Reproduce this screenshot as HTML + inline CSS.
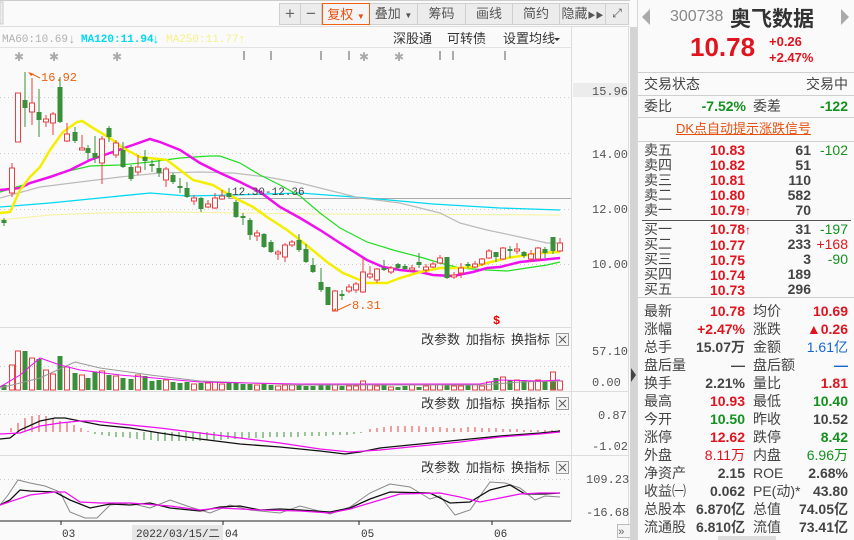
<!DOCTYPE html>
<html><head><meta charset="utf-8">
<style>
*{margin:0;padding:0;box-sizing:border-box}
body{width:854px;height:540px;overflow:hidden;background:#fafafa;font-family:"Liberation Sans","Noto Sans CJK SC",sans-serif;position:relative}
.a{position:absolute;white-space:nowrap}
.cn{font-family:"Liberation Sans","Noto Sans CJK SC",sans-serif}
.btn{position:absolute;top:3px;height:22px;border-right:1px solid #cfcfcf;font-size:13px;color:#555;text-align:center;line-height:21px;font-family:"Liberation Sans","Noto Sans CJK SC",sans-serif}
#rp{position:absolute;left:637px;top:0;width:217px;height:540px;background:#fafafa;border-left:1px solid #d8d8d8}
.r{position:absolute;font-size:14px;line-height:16px;color:#444;white-space:nowrap;font-family:"Liberation Sans","Noto Sans CJK SC",sans-serif}
.v{position:absolute;font-size:14px;line-height:16px;font-weight:bold;white-space:nowrap;text-align:right;font-family:"Liberation Sans","Noto Sans CJK SC",sans-serif}
.red{color:#e0141e}.grn{color:#13901e}.dk{color:#444}.blu{color:#1668d0}
.hl{position:absolute;left:0;width:217px;height:1px;background:#cfcfcf}
</style></head><body>

<svg width="630" height="540" style="position:absolute;left:0;top:0" font-family="Liberation Mono, monospace">
<rect x="0" y="0" width="630" height="540" fill="#fafafa"/>
<line x1="0" y1="0.5" x2="630" y2="0.5" stroke="#ccc"/>
<rect x="0" y="2" width="3" height="22" fill="#eee" stroke="#ccc"/>
<line x1="0" y1="26.5" x2="630" y2="26.5" stroke="#ddd"/>
<line x1="0" y1="47.5" x2="571" y2="47.5" stroke="#e2e2e2"/>
<line x1="571.5" y1="27" x2="571.5" y2="521" stroke="#ddd"/>
<line x1="628.5" y1="27" x2="628.5" y2="540" stroke="#ddd"/>
<!-- MA row -->
<text x="2" y="42" font-size="11" fill="#b0b0b0">MA60:10.69</text>
<text x="68" y="43" font-size="13" fill="#b0b0b0">↓</text>
<text x="81" y="42" font-size="11" fill="#00d8f0" font-weight="bold">MA120:11.94</text>
<text x="152" y="43" font-size="13" fill="#00d8f0">↓</text>
<text x="166" y="42" font-size="11" fill="#f4f08a">MA250:11.77</text>
<text x="238" y="43" font-size="13" fill="#f4f08a">↑</text>
<g font-family="Liberation Sans, Noto Sans CJK SC, sans-serif" font-size="13" fill="#333">
<text x="393" y="43">深股通</text><text x="447" y="43">可转债</text><text x="503" y="43">设置均线</text></g>
<path d="M554 38h6l-3 3z" fill="#333"/>
<!-- asterisks & markers -->
<g fill="#aaa" font-size="12" font-family="DejaVu Sans, sans-serif">
<text x="14" y="61">✱</text><text x="49" y="61">✱</text><text x="112" y="61">✱</text><text x="359" y="61">✱</text><text x="394" y="61">✱</text></g>
<g stroke="#aaa" stroke-width="2">
<path d="M244 51v9M271 51v9M321 51v9M349 51v9M440 51v9M453 51v9M505 51v9"/></g>
<!-- grid -->
<g stroke="#ccc" stroke-dasharray="1 3">
<path d="M0 97.5H571M0 153.5H571M0 209.5H571M0 264.5H571M0 366.5H571M0 414.5H571M0 479.5H571"/></g>
<line x1="228" y1="198.5" x2="571" y2="198.5" stroke="#aaa"/>
<!-- right axis labels -->
<rect x="573" y="83" width="54" height="14" fill="#ececec"/>
<g font-size="12" fill="#555">
<text x="592" y="95">15.96</text><text x="592" y="158">14.00</text><text x="592" y="213">12.00</text><text x="592" y="268">10.00</text>
<text x="592" y="355">57.10</text><text x="592" y="386">0.00</text>
<text x="598" y="419">0.87</text><text x="592" y="450">-1.02</text>
<text x="586" y="483">109.23</text><text x="586" y="516">-16.68</text></g>
<line x1="0" y1="327.5" x2="571" y2="327.5" stroke="#ddd"/>
<line x1="0" y1="391.5" x2="628" y2="391.5" stroke="#ddd"/>
<line x1="0" y1="455.5" x2="628" y2="455.5" stroke="#ddd"/>
<line x1="0" y1="521" x2="571" y2="521" stroke="#222"/>
<!-- MA lines -->
<g fill="none">
<polyline stroke="#f6f39a" stroke-width="1" points="0,220 50,215 100,213 167,212 320,214 560,215"/>
<polyline stroke="#00d8f0" stroke-width="1.3" points="0,207 50,203 100,198 150,193 187,196 233,195 300,193 367,198 433,204 500,208 560,210"/>
<polyline stroke="#bbb" stroke-width="1.2" points="0,198 40,187 80,182 120,177 160,173 200,172 233,173 267,177 300,183 320,188 360,198 400,203 440,213 460,223 487,230 520,237 547,243 560,243"/>
<polyline stroke="#22dd22" stroke-width="1.2" points="0,192 30,183 60,173 90,166 120,165 150,162 180,158 210,156 220,156 240,163 260,175 280,185 300,196 320,213 340,228 367,242 393,250 420,257 440,263 460,268 487,270 507,271 527,268 547,265 560,262"/>
<polyline stroke="#ee11ee" stroke-width="2.5" points="0,190 20,188 30,183 50,177 70,170 90,160 110,153 130,146 150,139 160,142 180,150 200,163 220,173 240,182 260,192 280,207 300,218 320,230 340,243 367,260 383,267 400,270 420,272 433,275 453,276 473,272 487,268 500,267 520,262 540,260 560,258"/>
<polyline stroke="#f5ee00" stroke-width="2.5" points="0,213 10,212 20,190 30,177 40,167 50,150 63,132 77,122 82,121 93,128 110,138 123,148 140,157 167,160 180,170 193,180 213,185 233,197 253,207 267,217 287,230 300,240 310,248 327,262 343,273 367,283 387,283 400,278 420,272 440,268 460,268 473,267 487,263 507,258 527,255 540,253 560,252"/>
</g>
<!-- candles -->
<path stroke="#3a8f3a" stroke-width="1" d="M4 218V226M25 72V127M39 89V137M60 77V123M75 127V143M88 145V160M95 136V163M109 126V142M123 142V168M131 165V181M145 150V170M152 160V172M159 160V177M173 173V184M180 178V193M187 182V198M201 197V212M229 188V198M236 200V218M243 213V225M250 218V240M264 233V248M271 240V253M299 234V252M306 244V263M313 258V273M321 268V292M328 287V305M342 290V300M384 260V271M398 263V270M405 264V270M419 253V268M447 257V279M468 262V268M496 252V262M510 246V258M524 251V258M545 247V258M553 237V254"/>
<path stroke="#e84040" stroke-width="1" d="M12 163V197M18 93V142M32 78V125M46 115V127M53 112V135M67 123V142M82 135V150M102 136V184M116 140V158M138 155V175M166 167V187M194 195V205M208 200V208M215 193V209M222 190V200M257 230V241M278 250V260M285 243V262M292 240V247M335 290V311M349 284V293M356 282V293M363 258V293M370 266V279M377 268V283M391 266V274M412 265V272M426 264V272M433 262V268M440 255V264M454 272V279M461 263V278M475 261V268M482 258V266M489 249V259M503 247V260M517 243V254M531 250V262M538 247V261M560 238V252"/>
<g fill="#3a8f3a">
<rect x="1.5" y="220" width="5" height="3"/><rect x="22.5" y="100" width="5" height="8"/><rect x="36.5" y="112" width="5" height="8"/><rect x="57.5" y="87" width="5" height="35"/><rect x="72.5" y="132" width="5" height="9"/><rect x="85.5" y="148" width="5" height="5"/><rect x="92.5" y="153" width="5" height="5"/><rect x="106.5" y="128" width="5" height="9"/><rect x="120.5" y="150" width="5" height="17"/><rect x="128.5" y="167" width="5" height="12"/><rect x="142.5" y="157" width="5" height="4"/><rect x="149.5" y="164" width="5" height="2"/><rect x="156.5" y="168" width="5" height="5"/><rect x="170.5" y="175" width="5" height="7"/><rect x="177.5" y="186" width="5" height="2"/><rect x="184.5" y="188" width="5" height="9"/><rect x="198.5" y="198" width="5" height="11"/><rect x="226.5" y="193" width="5" height="4"/><rect x="233.5" y="202" width="5" height="15"/><rect x="240.5" y="216" width="5" height="2"/><rect x="247.5" y="220" width="5" height="15"/><rect x="261.5" y="234" width="5" height="13"/><rect x="268.5" y="242" width="5" height="10"/><rect x="296.5" y="240" width="5" height="10"/><rect x="303.5" y="249" width="5" height="13"/><rect x="310.5" y="265" width="5" height="7"/><rect x="318.5" y="282" width="5" height="8"/><rect x="325.5" y="287" width="5" height="18"/><rect x="339.5" y="294" width="5" height="2"/><rect x="381.5" y="268" width="5" height="2"/><rect x="395.5" y="264" width="5" height="4"/><rect x="402.5" y="266" width="5" height="3"/><rect x="416.5" y="262" width="5" height="3"/><rect x="444.5" y="257" width="5" height="21"/><rect x="465.5" y="264" width="5" height="2"/><rect x="493.5" y="252" width="5" height="5"/><rect x="507.5" y="249" width="5" height="2"/><rect x="521.5" y="252" width="5" height="4"/><rect x="542.5" y="249" width="5" height="4"/><rect x="550.5" y="237" width="5" height="14"/>
</g>
<g fill="#fafafa" stroke="#e84040" stroke-width="1">
<rect x="9.5" y="168" width="5" height="25"/><rect x="15.5" y="93" width="5" height="49"/><rect x="29.5" y="103" width="5" height="9"/><rect x="43.5" y="119" width="5" height="3"/><rect x="50.5" y="114" width="5" height="9"/><rect x="64.5" y="134" width="5" height="7"/><rect x="79.5" y="148" width="5" height="2"/><rect x="99.5" y="139" width="5" height="24"/><rect x="113.5" y="143" width="5" height="12"/><rect x="135.5" y="167" width="5" height="5"/><rect x="163.5" y="169" width="5" height="11"/><rect x="191.5" y="198" width="5" height="3"/><rect x="205.5" y="204" width="5" height="3"/><rect x="212.5" y="198" width="5" height="10"/><rect x="219.5" y="196" width="5" height="3"/><rect x="254.5" y="233" width="5" height="3"/><rect x="275.5" y="252" width="5" height="2"/><rect x="282.5" y="245" width="5" height="12"/><rect x="289.5" y="242" width="5" height="3"/><rect x="332.5" y="291" width="5" height="20"/><rect x="346.5" y="287" width="5" height="4"/><rect x="353.5" y="284" width="5" height="6"/><rect x="360.5" y="272" width="5" height="20"/><rect x="367.5" y="274" width="5" height="3"/><rect x="374.5" y="269" width="5" height="11"/><rect x="388.5" y="268" width="5" height="4"/><rect x="409.5" y="268" width="5" height="2"/><rect x="423.5" y="267" width="5" height="3"/><rect x="430.5" y="264" width="5" height="3"/><rect x="437.5" y="258" width="5" height="5"/><rect x="451.5" y="275" width="5" height="2"/><rect x="458.5" y="268" width="5" height="5"/><rect x="472.5" y="264" width="5" height="3"/><rect x="479.5" y="259" width="5" height="5"/><rect x="486.5" y="251" width="5" height="7"/><rect x="500.5" y="248" width="5" height="11"/><rect x="514.5" y="249" width="5" height="2"/><rect x="528.5" y="254" width="5" height="5"/><rect x="535.5" y="248" width="5" height="11"/><rect x="557.5" y="243" width="5" height="8"/>
</g>
<!-- annotations -->
<path d="M28 72l6 2-3 2z" fill="#f06010"/><path d="M30 73l10 5" stroke="#f06010"/>
<text x="41" y="81" font-size="12" fill="#f06010">16.92</text>
<path d="M336 311l-4 0 4-3z" fill="#f06010"/><path d="M338 310l13-6" stroke="#f06010"/>
<text x="352" y="309" font-size="12" fill="#f06010">8.31</text>
<text x="232" y="195" font-size="11" fill="#444">12.30-12.36</text>
<text x="493" y="324" font-size="12" font-weight="bold" fill="#e00">$</text>
<!-- panel headers -->
<g font-family="Liberation Sans, Noto Sans CJK SC, sans-serif" font-size="13" fill="#333">
<text x="421" y="344">改参数</text><text x="466" y="344">加指标</text><text x="511" y="344">换指标</text>
<text x="421" y="408">改参数</text><text x="466" y="408">加指标</text><text x="511" y="408">换指标</text>
<text x="421" y="472">改参数</text><text x="466" y="472">加指标</text><text x="511" y="472">换指标</text></g>
<g fill="#f4f4f4" stroke="#999"><rect x="556.5" y="333.5" width="12" height="12"/><rect x="556.5" y="397.5" width="12" height="12"/><rect x="556.5" y="461.5" width="12" height="12"/></g>
<path d="M559 336l7 7M566 336l-7 7M559 400l7 7M566 400l-7 7M559 464l7 7M566 464l-7 7" stroke="#555"/>
<!-- volume -->
<g fill="#3a8f3a">
<rect x="1.5" y="385" width="5" height="5"/><rect x="22.5" y="351" width="5" height="39"/><rect x="36.5" y="359" width="5" height="31"/><rect x="57.5" y="356" width="5" height="34"/><rect x="72.5" y="373" width="5" height="17"/><rect x="85.5" y="378" width="5" height="12"/><rect x="92.5" y="372" width="5" height="18"/><rect x="106.5" y="375" width="5" height="15"/><rect x="120.5" y="378" width="5" height="12"/><rect x="128.5" y="379" width="5" height="11"/><rect x="142.5" y="376" width="5" height="14"/><rect x="149.5" y="381" width="5" height="9"/><rect x="156.5" y="380" width="5" height="10"/><rect x="170.5" y="382" width="5" height="8"/><rect x="177.5" y="383" width="5" height="7"/><rect x="184.5" y="382" width="5" height="8"/><rect x="198.5" y="383" width="5" height="7"/><rect x="226.5" y="383" width="5" height="7"/><rect x="233.5" y="383" width="5" height="7"/><rect x="240.5" y="384" width="5" height="6"/><rect x="247.5" y="384" width="5" height="6"/><rect x="261.5" y="384" width="5" height="6"/><rect x="268.5" y="385" width="5" height="5"/><rect x="296.5" y="385" width="5" height="5"/><rect x="303.5" y="386" width="5" height="4"/><rect x="310.5" y="386" width="5" height="4"/><rect x="318.5" y="385" width="5" height="5"/><rect x="325.5" y="384" width="5" height="6"/><rect x="339.5" y="386" width="5" height="4"/><rect x="381.5" y="384" width="5" height="6"/><rect x="395.5" y="387" width="5" height="3"/><rect x="402.5" y="386" width="5" height="4"/><rect x="416.5" y="387" width="5" height="3"/><rect x="444.5" y="384" width="5" height="6"/><rect x="465.5" y="385" width="5" height="5"/><rect x="493.5" y="378" width="5" height="12"/><rect x="507.5" y="380" width="5" height="10"/><rect x="521.5" y="380" width="5" height="10"/><rect x="542.5" y="381" width="5" height="9"/><rect x="550.5" y="381" width="5" height="9"/>
</g>
<g fill="none" stroke="#e84040">
<rect x="9.5" y="365" width="5" height="25"/><rect x="15.5" y="351" width="5" height="39"/><rect x="29.5" y="358" width="5" height="32"/><rect x="43.5" y="370" width="5" height="20"/><rect x="50.5" y="374" width="5" height="16"/><rect x="64.5" y="367" width="5" height="23"/><rect x="79.5" y="375" width="5" height="15"/><rect x="99.5" y="371" width="5" height="19"/><rect x="113.5" y="376" width="5" height="14"/><rect x="135.5" y="375" width="5" height="15"/><rect x="163.5" y="380" width="5" height="10"/><rect x="191.5" y="384" width="5" height="6"/><rect x="205.5" y="383" width="5" height="7"/><rect x="212.5" y="382" width="5" height="8"/><rect x="219.5" y="384" width="5" height="6"/><rect x="254.5" y="385" width="5" height="5"/><rect x="275.5" y="386" width="5" height="4"/><rect x="282.5" y="385" width="5" height="5"/><rect x="289.5" y="385" width="5" height="5"/><rect x="332.5" y="385" width="5" height="5"/><rect x="346.5" y="386" width="5" height="4"/><rect x="353.5" y="386" width="5" height="4"/><rect x="360.5" y="381" width="5" height="9"/><rect x="367.5" y="385" width="5" height="5"/><rect x="374.5" y="386" width="5" height="4"/><rect x="388.5" y="387" width="5" height="3"/><rect x="409.5" y="384" width="5" height="6"/><rect x="423.5" y="386" width="5" height="4"/><rect x="430.5" y="385" width="5" height="5"/><rect x="437.5" y="384" width="5" height="6"/><rect x="451.5" y="386" width="5" height="4"/><rect x="458.5" y="386" width="5" height="4"/><rect x="472.5" y="385" width="5" height="5"/><rect x="479.5" y="386" width="5" height="4"/><rect x="486.5" y="382" width="5" height="8"/><rect x="500.5" y="377" width="5" height="13"/><rect x="514.5" y="380" width="5" height="10"/><rect x="528.5" y="381" width="5" height="9"/><rect x="535.5" y="380" width="5" height="10"/><rect x="550.5" y="372" width="5" height="18"/><rect x="557.5" y="381" width="5" height="9"/>
</g>
<polyline fill="none" stroke="#999" points="0,388 40,378 75,362 100,368 150,375 200,381 300,385 480,385 520,382 560,381"/>
<polyline fill="none" stroke="#ee11ee" points="0,387 20,375 40,358 60,365 80,370 120,375 200,382 300,384 480,384 500,380 540,381 560,380"/>
<!-- MACD -->
<path stroke="#e84040" d="M11 432V428M18 432V423M25 432V418M32 432V416M39 432V415M46 432V416M53 432V418M60 432V421M67 432V423M74 432V425M81 432V428M88 432V431M370 432V429M377 432V428M384 432V427M391 432V426M398 432V426M405 432V426M412 432V426M419 432V426M426 432V427M433 432V427M440 432V427M447 432V428M454 432V428M461 432V428M468 432V427M475 432V427M482 432V428M489 432V428M496 432V428M503 432V429M510 432V429M517 432V429M524 432V430M531 432V430M538 432V430M545 432V430M552 432V430M559 432V430"/>
<path stroke="#3a8f3a" d="M95 432V434M102 432V435M109 432V436M116 432V437M123 432V437M130 432V438M137 432V439M144 432V440M151 432V440M158 432V441M165 432V441M172 432V441M179 432V441M186 432V441M193 432V441M200 432V441M207 432V440M214 432V440M221 432V440M228 432V439M235 432V439M242 432V439M249 432V438M256 432V438M263 432V438M270 432V437M277 432V437M284 432V437M291 432V437M298 432V437M305 432V436M312 432V436M319 432V436M326 432V436M333 432V435M340 432V435M347 432V435M354 432V434M361 432V433"/>
<polyline fill="none" stroke="#111" stroke-width="1.3" points="0,439 10,438 20,430 40,421 55,418 65,418 80,421 100,425 130,428 160,433 200,439 240,444 280,447 320,451 345,454 360,452 380,448 420,444 460,440 500,436 540,433 560,431"/>
<polyline fill="none" stroke="#ee11ee" stroke-width="1.3" points="0,434 20,433 40,426 60,423 80,421 95,421 120,424 160,428 200,433 240,438 280,443 320,449 350,452 380,450 420,446 460,442 500,437 540,434 560,432"/>
<!-- KDJ -->
<polyline fill="none" stroke="#888" points="0,505 8,495 18,480 30,483 45,486 60,492 70,512 85,518 97,518 110,505 130,503 150,508 170,500 190,507 210,513 230,505 250,510 280,513 300,506 330,514 350,507 370,493 390,484 410,487 430,499 440,496 455,515 470,510 490,482 505,483 520,488 535,500 545,496 560,497"/>
<polyline fill="none" stroke="#111" stroke-width="1.3" points="0,505 10,500 20,490 30,491 55,492 70,500 90,508 110,504 130,505 150,503 170,508 200,511 220,507 240,506 260,510 280,509 300,510 330,512 350,508 370,499 390,492 430,493 450,503 470,502 490,490 510,485 525,494 545,494 560,493"/>
<polyline fill="none" stroke="#ee11ee" stroke-width="1.3" points="0,505 30,495 55,492 65,492 80,502 100,503 130,503 170,506 200,510 220,508 260,510 300,511 330,513 350,509 380,500 400,494 440,493 460,497 480,502 500,498 520,494 540,493 560,493"/>
<!-- date axis -->
<path d="M61 521v4M223 521v4M359 521v4M492 521v4" stroke="#222"/>
<rect x="132" y="525" width="91" height="15" fill="#e6e6e6"/>
<g font-size="11" fill="#333"><text x="62" y="537">03</text><text x="136" y="537">2022/03/15/二</text><text x="225" y="537">04</text><text x="361" y="537">05</text><text x="494" y="537">06</text></g>
<rect x="617.5" y="524.5" width="13" height="13" fill="#f4f4f4" stroke="#bbb"/>
<text x="618" y="535" font-size="11" fill="#666">»</text>
<!-- toolbar -->
<rect x="279.5" y="3.5" width="349" height="21" fill="#ececec" stroke="#cfcfcf"/>
</svg>

<div class="btn" style="left:280px;width:21px;font-size:17px;color:#666">+</div>
<div class="btn" style="left:301px;width:21px;font-size:17px;color:#666">−</div>
<div class="btn" style="left:322px;width:48px;border:1px solid #f06010;top:3px;color:#e85010;background:#f4f4f4">复权 <span style="font-size:8px">▼</span></div>
<div class="btn" style="left:370px;width:48px">叠加 <span style="font-size:8px">▼</span></div>
<div class="btn" style="left:418px;width:48px">筹码</div>
<div class="btn" style="left:466px;width:47px">画线</div>
<div class="btn" style="left:513px;width:47px">简约</div>
<div class="btn" style="left:560px;width:46px">隐藏<span style="font-size:8px">▶▶</span></div>
<div class="btn" style="left:606px;width:22px;border-right:none;font-size:12px">⤢</div>

<div class="a" style="left:630px;top:27px;width:7px;height:513px;background:#d4d4d4"></div>
<div class="a" style="left:631px;top:368px;width:0;height:0;border-top:7px solid transparent;border-bottom:7px solid transparent;border-left:5px solid #444"></div>

<div id="rp">
<div class="a" style="left:4px;top:9px;width:0;height:0;border-top:8px solid transparent;border-bottom:8px solid transparent;border-right:8px solid #aaa"></div>
<div class="a" style="left:32px;top:8px;font-size:16px;color:#888">300738</div>
<div class="a cn" style="left:92px;top:3px;font-size:21px;font-weight:bold;color:#333">奥飞数据</div>
<div class="a" style="left:203px;top:9px;width:0;height:0;border-top:8px solid transparent;border-bottom:8px solid transparent;border-left:8px solid #aaa"></div>
<div class="a" style="left:52px;top:32px;font-size:26px;font-weight:bold;color:#e0141e">10.78</div>
<div class="a" style="left:131px;top:34px;font-size:13px;font-weight:bold;color:#e0141e">+0.26</div>
<div class="a" style="left:131px;top:50px;font-size:13px;font-weight:bold;color:#e0141e">+2.47%</div>
<div class="hl" style="top:72px"></div>
<div class="r" style="left:6px;top:76px">交易状态</div><div class="r" style="right:6px;top:76px">交易中</div>
<div class="hl" style="top:95px"></div>
<div class="r" style="left:6px;top:98px">委比</div><div class="v grn" style="right:108px;top:98px">-7.52%</div>
<div class="r" style="left:115px;top:98px">委差</div><div class="v grn" style="right:6px;top:98px">-122</div>
<div class="hl" style="top:117px"></div>
<div class="r" style="left:38px;top:121px;font-size:13px;color:#e85010;text-decoration:underline">DK点自动提示涨跌信号</div>
<div class="hl" style="top:141px"></div>

<div class="r" style="left:6px;top:143px;line-height:15px">卖五<br>卖四<br>卖三<br>卖二<br>卖一</div>
<div class="v red" style="left:72px;top:143px;line-height:15px;text-align:left">10.83<br>10.82<br>10.81<br>10.80<br>10.79<span style="font-size:12px">↑</span></div>
<div class="v dk" style="right:43px;top:143px;line-height:15px">61<br>51<br>110<br>582<br>70</div>
<div class="v grn" style="right:6px;top:143px;line-height:15px;font-weight:normal">-102</div>
<div class="a" style="left:4px;top:220px;width:209px;height:1px;background:#555"></div>
<div class="r" style="left:6px;top:222px;line-height:15px">买一<br>买二<br>买三<br>买四<br>买五</div>
<div class="v red" style="left:72px;top:222px;line-height:15px;text-align:left">10.78<span style="font-size:12px">↑</span><br>10.77<br>10.75<br>10.74<br>10.73</div>
<div class="v dk" style="right:43px;top:222px;line-height:15px">31<br>233<br>3<br>189<br>296</div>
<div class="v" style="right:6px;top:222px;line-height:15px;font-weight:normal"><span class="grn">-197</span><br><span class="red">+168</span><br><span class="grn">-90</span></div>
<div class="hl" style="top:297px"></div>

<div class="r" style="left:6px;top:302px;line-height:18px">最新<br>涨幅<br>总手<br>盘后量<br>换手<br>最高<br>今开<br>涨停<br>外盘<br>净资产<br>收益㈠<br>总股本<br>流通股</div>
<div class="v" style="right:109px;top:302px;line-height:18px"><span class="red">10.78</span><br><span class="red">+2.47%</span><br><span class="dk">15.07万</span><br><span class="dk">—</span><br><span class="dk">2.21%</span><br><span class="red">10.93</span><br><span class="grn">10.50</span><br><span class="red">12.62</span><br><span class="red" style="font-weight:normal">8.11万</span><br><span class="dk">2.15</span><br><span class="dk">0.062</span><br><span class="dk">6.870亿</span><br><span class="dk">6.810亿</span></div>
<div class="r" style="left:115px;top:302px;line-height:18px">均价<br>涨跌<br>金额<br>盘后额<br>量比<br>最低<br>昨收<br>跌停<br>内盘<br>ROE<br>PE(动)*<br>总值<br>流值</div>
<div class="v" style="right:6px;top:302px;line-height:18px"><span class="red">10.69</span><br><span class="red">▲0.26</span><br><span class="blu" style="font-weight:normal">1.61亿</span><br><span class="blu">—</span><br><span class="red">1.81</span><br><span class="grn">10.40</span><br><span class="dk">10.52</span><br><span class="grn">8.42</span><br><span class="grn" style="font-weight:normal">6.96万</span><br><span class="dk">2.68%</span><br><span class="dk">43.80</span><br><span class="dk">74.05亿</span><br><span class="dk">73.41亿</span></div>
<div class="a" style="left:80px;top:536px;width:58px;height:4px;background:#ddd"></div>
</div>
</body></html>
